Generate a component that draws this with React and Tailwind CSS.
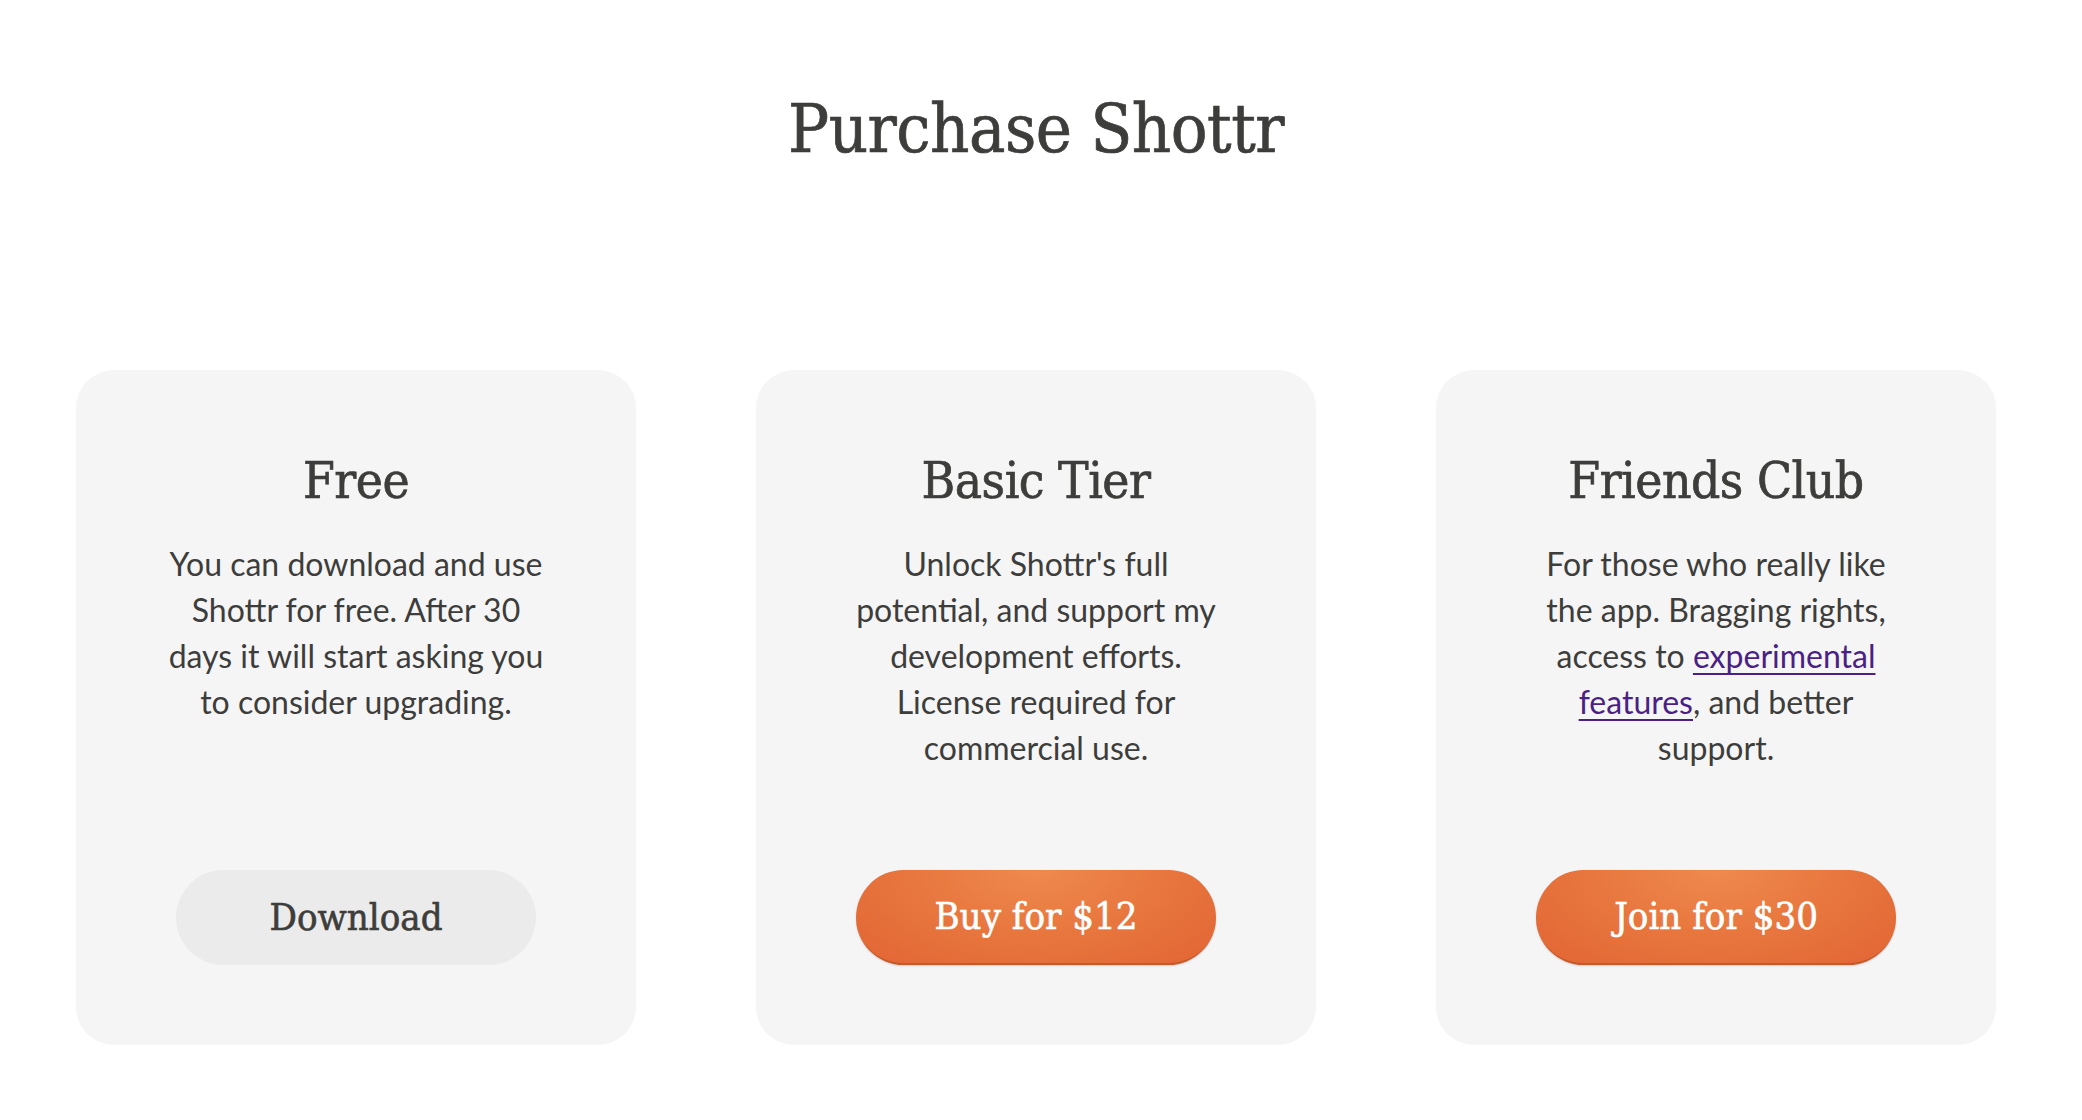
const slab = { fontFamily: '"DejaVu Serif Condensed", "DejaVu Serif", serif' };

const plans = [
  {
    name: "Free",
    lines: ["You can download and use", "Shottr for free. After 30", "days it will start asking you", "to consider upgrading."],
    cta: "Download",
    primary: false,
  },
  {
    name: "Basic Tier",
    lines: ["Unlock Shottr's full", "potential, and support my", "development efforts.", "License required for", "commercial use."],
    cta: "Buy for $12",
    primary: true,
  },
  {
    name: "Friends Club",
    lines: [
      "For those who really like",
      "the app. Bragging rights,",
      <>
        access to{" "}
        <a href="#" className="text-[#4a1f86] underline underline-offset-[5px] decoration-2">
          experimental
        </a>
      </>,
      <>
        <a href="#" className="text-[#4a1f86] underline underline-offset-[5px] decoration-2">
          features
        </a>
        , and better
      </>,
      "support.",
    ],
    cta: "Join for $30",
    primary: true,
  },
];

function PlanCard({ plan }) {
  return (
    <div className="flex flex-col items-center h-[675px] rounded-[38px] bg-[#f5f5f5] pt-[81px] pb-[80px]">
      <h2
        className="text-[51px] leading-[60px] text-[#3d3d3b] tracking-[-0.5px] [-webkit-text-stroke:0.7px_#3d3d3b]"
        style={slab}
      >
        {plan.name}
      </h2>
      <p className="mt-[30px] text-[32px] leading-[46px] text-[#3d3d3b] text-center">
        {plan.lines.map((l, i) => (
          <span key={i} className="block">
            {l}
          </span>
        ))}
      </p>
      <button
        className={
          "mt-auto w-[360px] h-[95px] rounded-full text-[38px] " +
          (plan.primary
            ? "text-white [-webkit-text-stroke:0.6px_#ffffff] bg-[radial-gradient(ellipse_at_50%_0%,#ef8a4e_0%,#e8783f_45%,#e26534_100%)] border-b-2 border-[#c65a2b] shadow-[0_1px_2px_rgba(0,0,0,0.15)]"
            : "text-[#3d3d3b] [-webkit-text-stroke:0.6px_#3d3d3b] bg-[#ebebeb]")
        }
        style={slab}
      >
        {plan.cta}
      </button>
    </div>
  );
}

export default function App() {
  return (
    <div className="min-h-screen bg-white" style={{ fontFamily: 'Lato, "Open Sans", sans-serif' }}>
      <div className="w-[1920px] ml-[76px] pt-[89px]">
        <h1
          className="text-center text-[68px] leading-[80px] text-[#3d3d3b] tracking-[-0.5px] [-webkit-text-stroke:0.7px_#3d3d3b]"
          style={slab}
        >
          Purchase Shottr
        </h1>
        <div className="grid grid-cols-3 gap-[120px] mt-[201px]">
          {plans.map((p) => (
            <PlanCard key={p.name} plan={p} />
          ))}
        </div>
      </div>
    </div>
  );
}
